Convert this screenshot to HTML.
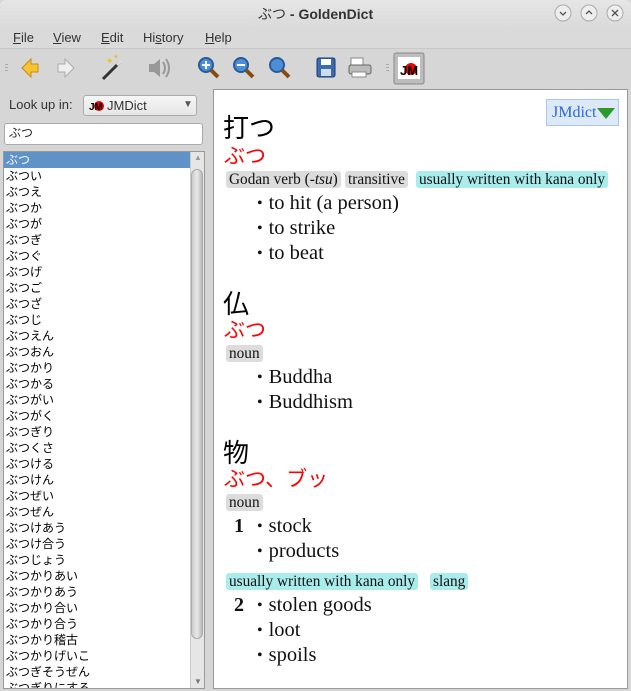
<!DOCTYPE html>
<html><head><meta charset="utf-8"><style>
*{margin:0;padding:0;box-sizing:border-box}
body{width:631px;height:691px;overflow:hidden;background:#d6d6d6;font-family:"Liberation Sans","DejaVu Sans","Noto Sans CJK JP",sans-serif;font-size:13px;color:#222;position:relative}
.a{position:absolute;white-space:nowrap;line-height:1}
.s{font-family:"Liberation Serif","Noto Serif CJK SC","Noto Sans CJK JP",serif;color:#111}
.j{font-family:"Liberation Serif","Noto Sans CJK JP",sans-serif}
.tag{position:absolute;font-family:"Liberation Serif",serif;font-size:15.3px;line-height:17px;padding:0 3px;border-radius:3px;background:#dcdcdc;color:#111;white-space:nowrap}
.cy{background:#a9ecec}
.li{position:absolute;font-family:"Liberation Serif",serif;font-size:20.5px;line-height:22px;color:#111;white-space:nowrap}
.li:before{content:"•";font-size:16px;position:relative;top:-1px;margin-right:6px}
.row{position:absolute;left:6px;font-family:"Noto Sans CJK JP",sans-serif;font-size:12px;line-height:16px;height:16px;color:#000}
</style></head><body>
<div class="a" style="left:0;top:0;width:631px;height:28px;background:linear-gradient(#e6e6e6,#dadada);border-radius:6px 6px 0 0"></div>
<div class="a" style="left:258px;top:7px;font-size:14px;font-weight:bold;color:#333"><span style="font-family:'Noto Sans CJK JP';font-weight:normal">ぶつ</span> - GoldenDict</div>
<svg class="a" style="left:550px;top:3px" width="80" height="22">
<g fill="#eee" stroke="#aaa"><circle cx="13" cy="10" r="8"/><circle cx="39" cy="10" r="8"/><circle cx="65" cy="10" r="8"/></g>
<g stroke="#555" stroke-width="1.3" fill="none"><path d="M10 9l3 3 3-3"/><path d="M36 11l3-3 3 3"/><path d="M62 7l6 6M68 7l-6 6"/></g>
</svg>
<div class="a" style="left:0;top:28px;width:631px;height:20px;background:#dadada"></div>
<div class="a" style="left:13px;top:31px;font-size:13px;color:#333"><u>F</u>ile</div>
<div class="a" style="left:53px;top:31px;font-size:13px;color:#333"><u>V</u>iew</div>
<div class="a" style="left:101px;top:31px;font-size:13px;color:#333"><u>E</u>dit</div>
<div class="a" style="left:143px;top:31px;font-size:13px;color:#333">Hi<u>s</u>tory</div>
<div class="a" style="left:205px;top:31px;font-size:13px;color:#333"><u>H</u>elp</div>
<div class="a" style="left:0;top:48px;width:631px;height:40px;background:#d6d6d6;border-top:1px solid #c8c8c8"></div>
<svg class="a" style="left:0;top:48px" width="631" height="40">
<g fill="#aaa"><rect x="5" y="16" width="3" height="1"/><rect x="5" y="19" width="3" height="1"/><rect x="5" y="22" width="3" height="1"/><rect x="386" y="16" width="3" height="1"/><rect x="386" y="19" width="3" height="1"/><rect x="386" y="22" width="3" height="1"/></g>
<path d="M22 20 L31 11 L31 16 L38 16 L38 24 L31 24 L31 29 Z" fill="#f7c531" stroke="#c98a10"/>
<path d="M74 20 L65 11 L65 16 L58 16 L58 24 L65 24 L65 29 Z" fill="#eee" stroke="#aaa"/>
<path d="M103 31 L120 14" stroke="#333" stroke-width="3"/><path d="M117 17 L121 13" stroke="#ddd" stroke-width="3"/>
<text x="106" y="16" font-size="9" fill="#f0c020">✦</text><text x="113" y="11" font-size="7" fill="#f0c020">✦</text>
<path d="M149 16 L154 16 L160 11 L160 29 L154 24 L149 24 Z" fill="#999"/><path d="M163 14 Q167 20 163 26 M166 11 Q172 20 166 29" stroke="#999" fill="none" stroke-width="2"/>
<g><circle cx="206" cy="17" r="7" fill="#4a90d9" stroke="#2a5a99" stroke-width="2"/><path d="M211 22 L218 29" stroke="#8a4a10" stroke-width="4"/><path d="M202 17h8M206 13v8" stroke="#fff" stroke-width="2"/></g>
<g><circle cx="241" cy="17" r="7" fill="#4a90d9" stroke="#2a5a99" stroke-width="2"/><path d="M246 22 L253 29" stroke="#8a4a10" stroke-width="4"/><path d="M237 17h8" stroke="#fff" stroke-width="2"/></g>
<g><circle cx="277" cy="17" r="7" fill="#4a90d9" stroke="#2a5a99" stroke-width="2"/><path d="M282 22 L289 29" stroke="#8a4a10" stroke-width="4"/></g>
<rect x="317" y="10" width="18" height="19" rx="2" fill="#3a6ab0" stroke="#1a3a70"/><rect x="321" y="11" width="10" height="6" fill="#fff"/><rect x="321" y="21" width="10" height="7" fill="#cde"/>
<rect x="351" y="10" width="12" height="8" fill="#fff" stroke="#888"/><rect x="349" y="17" width="22" height="9" rx="2" fill="#bbb" stroke="#666"/><rect x="352" y="24" width="14" height="5" fill="#fff" stroke="#888"/>
<rect x="394" y="5" width="30" height="31" rx="2" fill="#bdbdbd" stroke="#888"/><rect x="398" y="9" width="22" height="22" fill="#fff"/>
<circle cx="411" cy="21" r="6" fill="#e00"/><text x="400" y="27" font-size="13" font-weight="bold" font-family="Liberation Sans" fill="#000">JM</text>
</svg>
<div class="a" style="left:9px;top:98px;font-size:13px;color:#333">Look up in:</div>
<div class="a" style="left:83px;top:95px;width:114px;height:21px;border:1px solid #aaa;border-radius:3px;background:linear-gradient(#f6f6f6,#e6e6e6)"></div>
<svg class="a" style="left:89px;top:98px" width="16" height="14"><circle cx="10" cy="8" r="5" fill="#e00"/><text x="0" y="12" font-size="10" font-weight="bold" font-family="Liberation Sans">JM</text></svg>
<div class="a" style="left:107px;top:99px;font-size:13px;color:#333">JMDict</div>
<div class="a" style="left:183px;top:100px;font-size:10px;color:#555">▼</div>
<div class="a" style="left:4px;top:123px;width:199px;height:22px;border:1px solid #aaa;border-radius:3px;background:#fff"></div>
<div class="a" style="left:9px;top:127px;font-family:'Noto Sans CJK JP';font-size:12px">ぶつ</div>
<div class="a" style="left:3px;top:151px;width:202px;height:538px;border:1px solid #999;background:#fff;overflow:hidden">
<div style="position:absolute;left:0;top:0;width:187px;height:16px;background:#5f93c8"></div>
<div style="position:absolute;left:186px;top:0;width:14px;height:538px;background:#e6e6e6;border-left:1px solid #ccc"></div>
<div style="position:absolute;left:187px;top:17px;width:12px;height:470px;border-radius:6px;background:linear-gradient(90deg,#ccc,#e8e8e8,#bbb);border:1px solid #aaa"></div>
<div style="position:absolute;left:190px;top:2px;font-size:8px;color:#999">▲</div>
<div style="position:absolute;left:190px;top:526px;font-size:8px;color:#777">▼</div>
<div class="row" style="top:0;left:2px;color:#fff">ぶつ</div>
<div class="row" style="top:16px;left:2px">ぶつい</div><div class="row" style="top:32px;left:2px">ぶつえ</div><div class="row" style="top:48px;left:2px">ぶつか</div><div class="row" style="top:64px;left:2px">ぶつが</div><div class="row" style="top:80px;left:2px">ぶつぎ</div><div class="row" style="top:96px;left:2px">ぶつぐ</div><div class="row" style="top:112px;left:2px">ぶつげ</div><div class="row" style="top:128px;left:2px">ぶつご</div><div class="row" style="top:144px;left:2px">ぶつざ</div><div class="row" style="top:160px;left:2px">ぶつじ</div><div class="row" style="top:176px;left:2px">ぶつえん</div><div class="row" style="top:192px;left:2px">ぶつおん</div><div class="row" style="top:208px;left:2px">ぶつかり</div><div class="row" style="top:224px;left:2px">ぶつかる</div><div class="row" style="top:240px;left:2px">ぶつがい</div><div class="row" style="top:256px;left:2px">ぶつがく</div><div class="row" style="top:272px;left:2px">ぶつぎり</div><div class="row" style="top:288px;left:2px">ぶつくさ</div><div class="row" style="top:304px;left:2px">ぶつける</div><div class="row" style="top:320px;left:2px">ぶつけん</div><div class="row" style="top:336px;left:2px">ぶつぜい</div><div class="row" style="top:352px;left:2px">ぶつぜん</div><div class="row" style="top:368px;left:2px">ぶつけあう</div><div class="row" style="top:384px;left:2px">ぶつけ合う</div><div class="row" style="top:400px;left:2px">ぶつじょう</div><div class="row" style="top:416px;left:2px">ぶつかりあい</div><div class="row" style="top:432px;left:2px">ぶつかりあう</div><div class="row" style="top:448px;left:2px">ぶつかり合い</div><div class="row" style="top:464px;left:2px">ぶつかり合う</div><div class="row" style="top:480px;left:2px">ぶつかり稽古</div><div class="row" style="top:496px;left:2px">ぶつかりげいこ</div><div class="row" style="top:512px;left:2px">ぶつぎそうぜん</div><div class="row" style="top:528px;left:2px">ぶつぎりにする</div>
</div>
<div class="a" style="left:213px;top:89px;width:415px;height:600px;background:#fff;border:1px solid #999"></div>
<div class="a" style="left:546px;top:99px;width:73px;height:27px;background:#dde9f7;border:1px solid #a8c8f0"></div>
<div class="a s" style="left:552px;top:105px;font-size:16px;color:#2a6ad8">JMdict</div>
<div class="a" style="left:597px;top:108px;width:0;height:0;border-left:9px solid transparent;border-right:9px solid transparent;border-top:11px solid #2a9a2a"></div>

<div class="a j" style="left:223px;top:116px;font-size:26px;color:#000">打つ</div>
<div class="a j" style="left:224px;top:146px;font-size:21px;color:#f00">ぶつ</div>
<div class="tag" style="left:226px;top:171px">Godan verb (-<i>tsu</i>)</div>
<div class="tag" style="left:345px;top:171px">transitive</div>
<div class="tag cy" style="left:416px;top:171px">usually written with kana only</div>
<div class="li" style="left:257px;top:192px">to hit (a person)</div>
<div class="li" style="left:257px;top:217px">to strike</div>
<div class="li" style="left:257px;top:242px">to beat</div>

<div class="a j" style="left:223px;top:292px;font-size:26px;color:#000">仏</div>
<div class="a j" style="left:224px;top:320px;font-size:21px;color:#f00">ぶつ</div>
<div class="tag" style="left:226px;top:345px">noun</div>
<div class="li" style="left:257px;top:366px">Buddha</div>
<div class="li" style="left:257px;top:391px">Buddhism</div>

<div class="a j" style="left:223px;top:441px;font-size:26px;color:#000">物</div>
<div class="a j" style="left:224px;top:469px;font-size:21px;color:#f00">ぶつ、ブッ</div>
<div class="tag" style="left:226px;top:494px">noun</div>
<div class="a s" style="left:234px;top:516px;font-size:20px;font-weight:bold">1</div>
<div class="li" style="left:257px;top:515px">stock</div>
<div class="li" style="left:257px;top:540px">products</div>
<div class="tag cy" style="left:226px;top:573px">usually written with kana only</div>
<div class="tag cy" style="left:430px;top:573px">slang</div>
<div class="a s" style="left:234px;top:595px;font-size:20px;font-weight:bold">2</div>
<div class="li" style="left:257px;top:594px">stolen goods</div>
<div class="li" style="left:257px;top:619px">loot</div>
<div class="li" style="left:257px;top:644px">spoils</div>
</body></html>
